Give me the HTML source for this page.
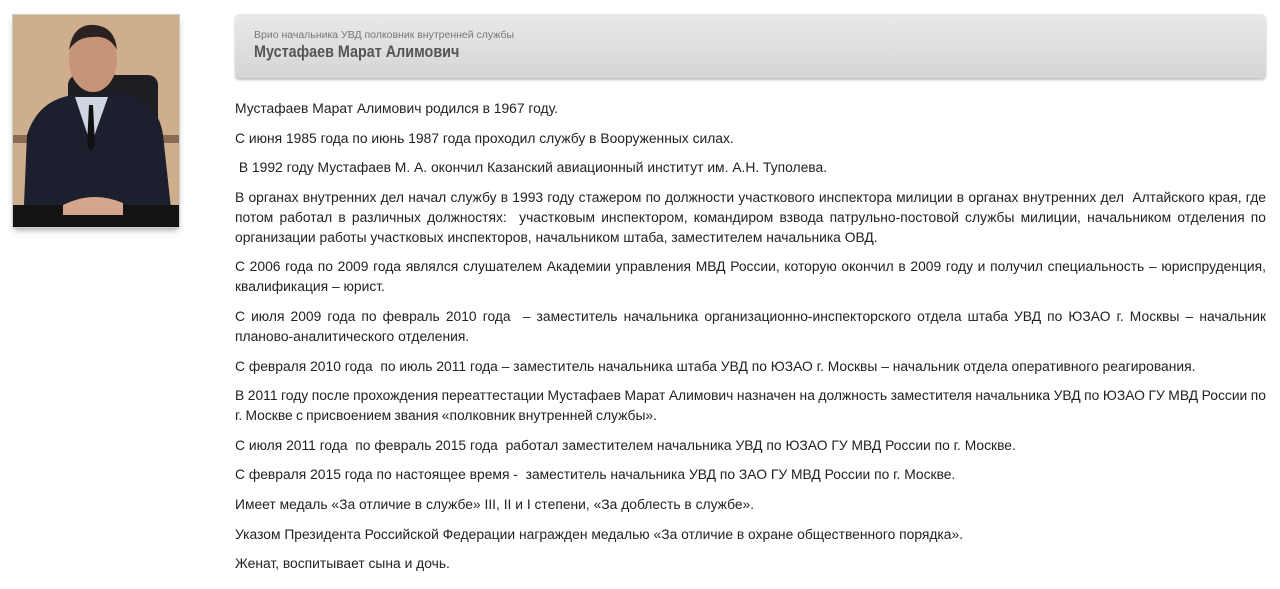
<!DOCTYPE html>
<html><head><meta charset="utf-8"><style>
body{margin:0;background:#fff;font-family:"Liberation Sans","DejaVu Sans",sans-serif;color:#222;}
.photo{position:absolute;left:12px;top:14px;width:166px;height:212px;border:1px solid #ccc;background:#c9a888;overflow:hidden;box-shadow:0 4px 6px -2px rgba(0,0,0,.35)}
.hdr{position:absolute;left:235px;top:14px;width:1031px;height:64px;border-radius:4px;background:linear-gradient(#e9e9e9,#d4d5d6);box-shadow:0 2px 2px rgba(0,0,0,.25)}
.hdr .s{position:absolute;left:19px;top:15px;font-size:10.5px;color:#777}
.hdr .n{position:absolute;left:19px;top:29px;font-size:16.5px;font-weight:bold;color:#555;transform:scaleX(0.87);transform-origin:left}
.txt{position:absolute;left:235px;top:98px;width:1031px;font-size:13.85px;line-height:20px;text-align:justify}
.txt p{margin:0 0 9.6px}
</style></head><body>
<div class="photo">
<svg width="166" height="212">
<rect width="166" height="212" fill="#cfae8e"/>
<rect x="0" y="120" width="166" height="8" fill="#8a6a50"/>
<rect x="55" y="60" width="90" height="110" fill="#1e1e22" rx="10"/>
<path d="M10 212 L14 120 Q25 85 60 80 L110 78 Q145 85 150 120 L160 212Z" fill="#1b1f2e"/>
<rect x="0" y="190" width="166" height="22" fill="#141414"/>
<path d="M62 82 L78 130 L95 82Z" fill="#cfd6e0"/>
<path d="M76 90 L80 90 L82 130 L78 136 L74 130Z" fill="#111"/>
<ellipse cx="80" cy="45" rx="24" ry="32" fill="#c89478"/>
<path d="M56 35 Q60 8 82 10 Q102 12 104 35 Q96 20 80 22 Q64 22 56 35Z" fill="#2a2220"/>
<path d="M50 190 Q80 175 110 188 L110 200 L50 200Z" fill="#d2a58c"/>
</svg>
</div>
<div class="hdr"><div class="s">Врио начальника УВД полковник внутренней службы</div><div class="n">Мустафаев Марат Алимович</div></div>
<div class="txt">
<p>Мустафаев Марат Алимович родился в 1967 году.</p>
<p>С июня 1985 года по июнь 1987 года проходил службу в Вооруженных силах.</p>
<p>&nbsp;В 1992 году Мустафаев М. А. окончил Казанский авиационный институт им. А.Н. Туполева.</p>
<p>В органах внутренних дел начал службу в 1993 году стажером по должности участкового инспектора милиции в органах внутренних дел&nbsp; Алтайского края, где потом работал в различных должностях:&nbsp; участковым инспектором, командиром взвода патрульно-постовой службы милиции, начальником отделения по организации работы участковых инспекторов, начальником штаба, заместителем начальника ОВД.</p>
<p>С 2006 года по 2009 года являлся слушателем Академии управления МВД России, которую окончил в 2009 году и получил специальность – юриспруденция, квалификация – юрист.</p>
<p>С июля 2009 года по февраль 2010 года&nbsp; – заместитель начальника организационно-инспекторского отдела штаба УВД по ЮЗАО г. Москвы – начальник планово-аналитического отделения.</p>
<p>С февраля 2010 года&nbsp; по июль 2011 года – заместитель начальника штаба УВД по ЮЗАО г. Москвы – начальник отдела оперативного реагирования.</p>
<p style="word-spacing:-0.6px">В 2011 году после прохождения переаттестации Мустафаев Марат Алимович назначен на должность заместителя начальника УВД по ЮЗАО ГУ МВД России по г. Москве с присвоением звания «полковник внутренней службы».</p>
<p>С июля 2011 года&nbsp; по февраль 2015 года&nbsp; работал заместителем начальника УВД по ЮЗАО ГУ МВД России по г. Москве.</p>
<p>С февраля 2015 года по настоящее время -&nbsp; заместитель начальника УВД по ЗАО ГУ МВД России по г. Москве.</p>
<p>Имеет медаль «За отличие в службе» III, II и I степени, «За доблесть в службе».</p>
<p>Указом Президента Российской Федерации награжден медалью «За отличие в охране общественного порядка».</p>
<p>Женат, воспитывает сына и дочь.</p>
</div>
</body></html>
